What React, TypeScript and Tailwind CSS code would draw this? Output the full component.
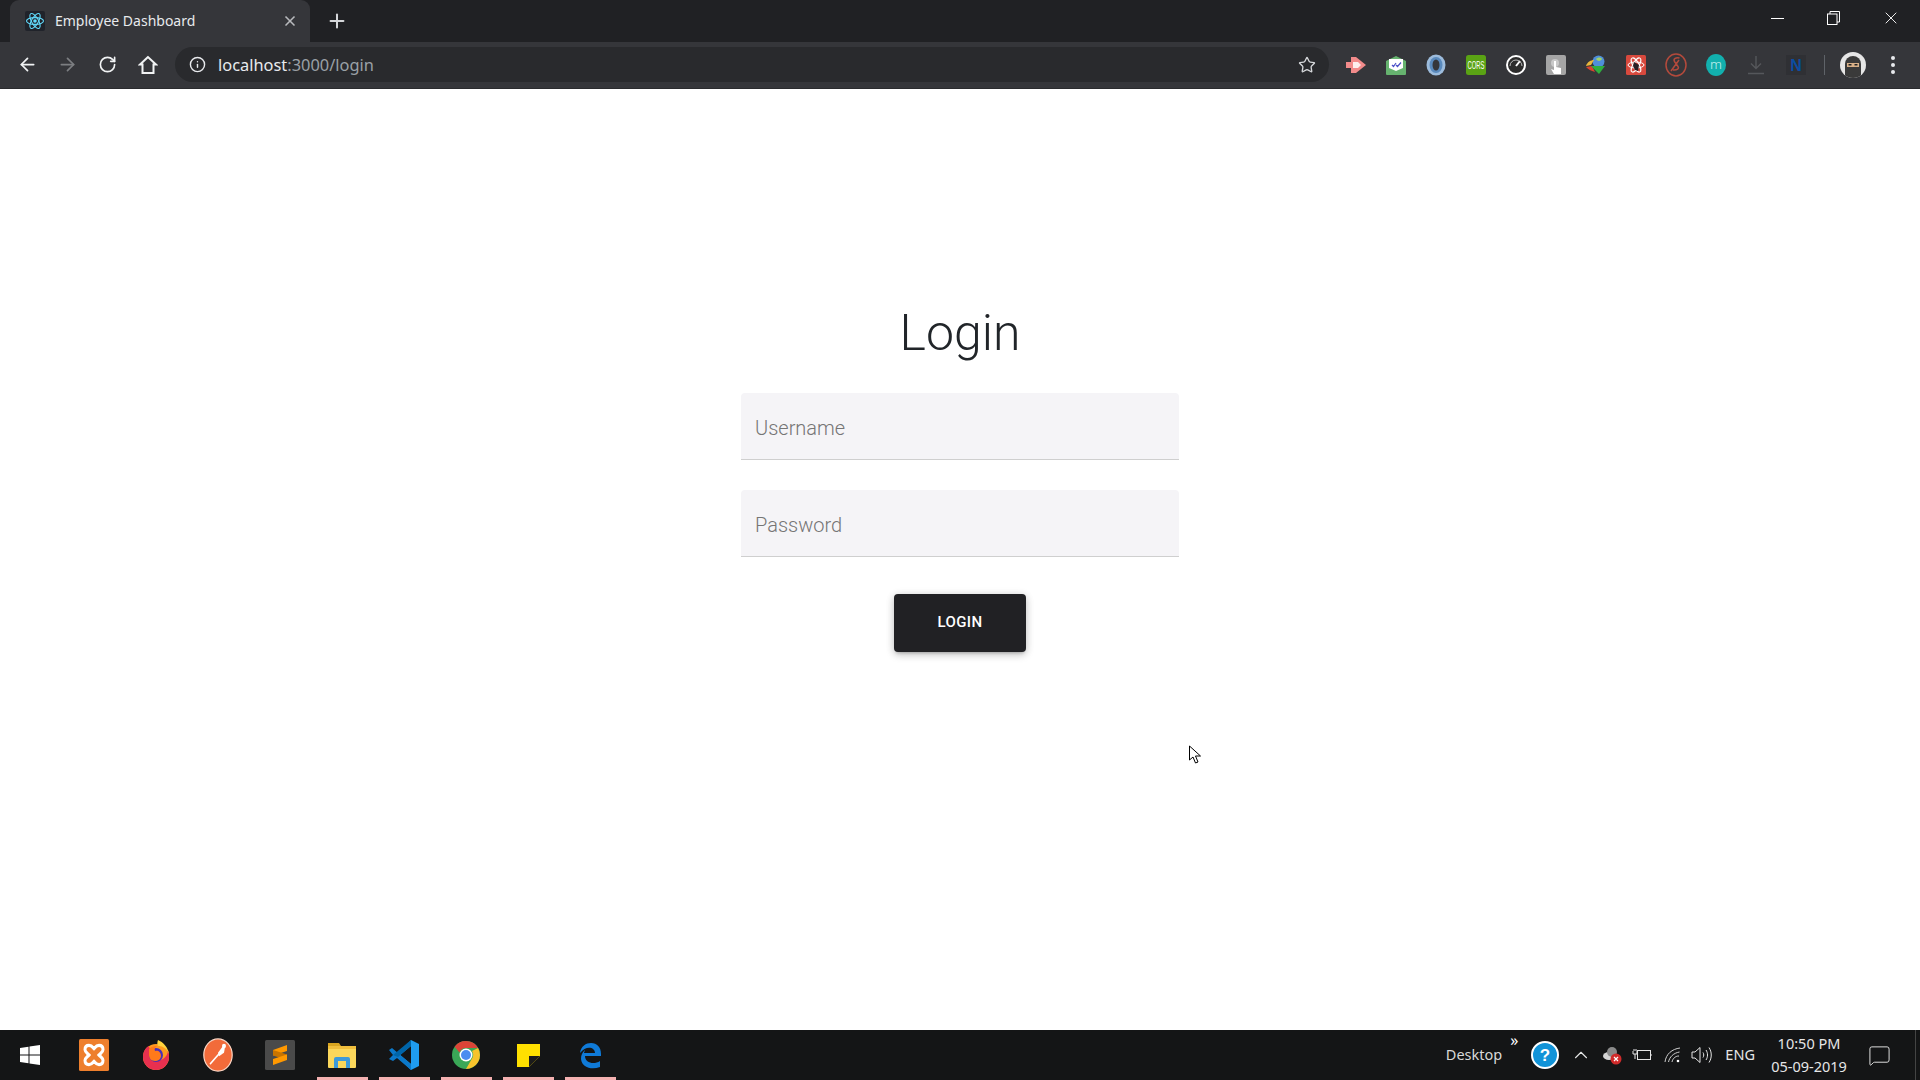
import { ArrowLeft, ArrowRight, RotateCw, Info, Star, Plus, X, ChevronUp, MessageSquare } from "lucide-react"

const uiFont = "font-['Noto_Sans','Open_Sans',sans-serif]"

function ReactLogo() {
    return (
        <svg width="20" height="20" viewBox="0 0 20 20" fill="none">
            <rect width="20" height="20" rx="2" fill="#20232a" />
            <g stroke="#61dafb" strokeWidth="1.1">
                <ellipse cx="10" cy="10" rx="8.5" ry="3.4" />
                <ellipse cx="10" cy="10" rx="8.5" ry="3.4" transform="rotate(60 10 10)" />
                <ellipse cx="10" cy="10" rx="8.5" ry="3.4" transform="rotate(120 10 10)" />
            </g>
            <circle cx="10" cy="10" r="1.8" fill="#61dafb" />
        </svg>
    )
}

// extension icons in the chrome toolbar
const extensions = [
    <svg key="a" width="22" height="22" viewBox="0 0 22 22">
        <path d="M1 8h5V3h5l10 8-10 8h-5v-5H1z" fill="#f28b8b" />
        <path d="M8 8h5l3 3-3 3H8z" fill="#fff" opacity="0.85" />
    </svg>,
    <svg key="b" width="20" height="20" viewBox="0 0 20 20">
        <path d="M0 6l10-5 10 5v13a1 1 0 0 1-1 1H1a1 1 0 0 1-1-1z" fill="#66b36f" />
        <path d="M3 4h14v9l-7 3-7-3z" fill="#fff" />
        <path d="M6 10l1.5 1.5L10 8M10 10l1.5 1.5L15 7.5" stroke="#4b50c8" strokeWidth="1.2" fill="none" />
    </svg>,
    <svg key="c" width="20" height="22" viewBox="0 0 20 22">
        <ellipse cx="10" cy="11" rx="9.5" ry="10.5" fill="#9dbcdc" />
        <ellipse cx="10" cy="11" rx="6.5" ry="8" fill="#5a8abd" />
        <ellipse cx="10" cy="11" rx="3.5" ry="5.5" fill="#35363a" />
    </svg>,
    <svg key="d" width="20" height="20" viewBox="0 0 20 20">
        <rect width="20" height="20" rx="2.5" fill="#5aa314" />
        <text x="10" y="14" textAnchor="middle" fontSize="10" fontFamily="'Liberation Sans',sans-serif" fill="#fff" textLength="17" lengthAdjust="spacingAndGlyphs">CORS</text>
    </svg>,
    <svg key="e" width="20" height="20" viewBox="0 0 20 20">
        <circle cx="10" cy="10" r="9" fill="#2c2c2c" stroke="#fff" strokeWidth="2" />
        <path d="M10 11l4-5" stroke="#fff" strokeWidth="2" />
        <path d="M4 11a6 6 0 0 1 12 0" stroke="#ddd" strokeWidth="0.8" fill="none" />
    </svg>,
    <svg key="f" width="20" height="20" viewBox="0 0 20 20">
        <rect width="20" height="20" rx="2" fill="#a5a5a5" />
        <circle cx="9" cy="8" r="4" fill="#c9c9c9" />
        <path d="M8 6h2v6l5 1v6H8l-3-5 3 1z" fill="#fff" />
    </svg>,
    <svg key="g" width="22" height="22" viewBox="0 0 22 22">
        <circle cx="13.5" cy="7.5" r="6" fill="#4f8fd9" />
        <path d="M11 5c2-2 5-2 6 0-1 2-4 3-6 0z" fill="#9fd06a" />
        <path d="M1 12c1-4 5-6 8-6l-3 5z" fill="#e8b73a" />
        <path d="M1 13c2 2 5 4 9 5l-3-6z" fill="#d8452e" />
        <path d="M6 12h14l-6 8z" fill="#2fae3f" />
    </svg>,
    <svg key="h" width="20" height="20" viewBox="0 0 20 20">
        <rect width="20" height="20" rx="1.5" fill="#d8493d" />
        <g stroke="#fff" strokeWidth="1" fill="none">
            <ellipse cx="10" cy="10" rx="8" ry="3" />
            <ellipse cx="10" cy="10" rx="8" ry="3" transform="rotate(60 10 10)" />
            <ellipse cx="10" cy="10" rx="8" ry="3" transform="rotate(120 10 10)" />
        </g>
        <path d="M8 7l5 3-1 6-3-1-2-4z" fill="#2a2024" />
    </svg>,
    <svg key="i" width="22" height="24" viewBox="0 0 22 24" fill="none" stroke="#b34a3c" strokeWidth="1.5">
        <ellipse cx="11" cy="12" rx="10" ry="11" />
        <path d="M14.5 5C11 4 8 6 9.5 8.5l3.5 5c1.500 2-1 4-5 3.500M6 18l8-11" />
    </svg>,
    <svg key="j" width="20" height="22" viewBox="0 0 20 22">
        <ellipse cx="10" cy="11" rx="10" ry="11" fill="#12b0ae" />
        <text x="10" y="15" textAnchor="middle" fontSize="13" fontFamily="Roboto,sans-serif" fontWeight="300" fill="#c5f1ef">m</text>
    </svg>,
    <svg key="k" width="18" height="20" viewBox="0 0 18 20" fill="none" stroke="#55575b" strokeWidth="1.4">
        <path d="M9 1v12M4 8.5L9 13.5l5-5M1 18.5h16" />
    </svg>,
    <svg key="l" width="20" height="20" viewBox="0 0 20 20">
        <rect width="20" height="20" fill="#2f3034" />
        <text x="10" y="16" textAnchor="middle" fontSize="16" fontWeight="700" fontFamily="'Liberation Sans',sans-serif" fill="#0b4da2">N</text>
    </svg>,
]

const taskbarApps = [
    {
        id: "xampp",
        open: false,
        icon: (
            <svg width="30" height="32" viewBox="0 0 30 30" preserveAspectRatio="none" fill="none">
                <rect width="30" height="30" rx="1.5" fill="#ee7f2d" />
                <path d="M10 6c3 0 4 2 5 3 1-1 2-3 5-3 3 0 4 2 4 4s-2 3-4 5c2 2 4 3 4 5s-1 4-4 4c-3 0-4-2-5-3-1 1-2 3-5 3-3 0-4-2-4-4s2-3 4-5c-2-2-4-3-4-5s1-4 4-4z" stroke="#fff" strokeWidth="3" />
            </svg>
        ),
    },
    {
        id: "firefox",
        open: false,
        icon: (
            <svg width="30" height="32" viewBox="0 0 30 32">
                <circle cx="15" cy="18" r="13" fill="#ff9a1f" />
                <path d="M2 18c0-5 2-9 6-11 0 3 3 4 4 4l-3 5c2 5 8 7 13 4 3-2 5-5 5-9 1 2 1 5 1 7a13 13 0 0 1-26 0z" fill="#e8304f" />
                <circle cx="15" cy="16" r="7" fill="#4a2fb8" />
                <path d="M8 10c3-3 6-3 8-3-2 1-3 3-2 5 3-1 6 1 6 5 0 3-3 5-6 5-4 0-6-3-6-6z" fill="#ff7a1a" />
                <path d="M17 1c5 2 10 7 11 14-2-5-6-8-10-8-2 0-2-3-1-6z" fill="#ffd33d" />
            </svg>
        ),
    },
    {
        id: "postman",
        open: false,
        icon: (
            <svg width="30" height="34" viewBox="0 0 30 30" preserveAspectRatio="none" fill="none">
                <circle cx="15" cy="15" r="14.2" fill="#f26b3a" stroke="#fbd7c6" strokeWidth="1.2" />
                <path d="M7 23L18 12" stroke="#fff" strokeWidth="1.5" />
                <path d="M15 13l5-6 2 1-1 5-5 3z" fill="#fff" />
                <circle cx="21" cy="7" r="2" fill="#fff" />
            </svg>
        ),
    },
    {
        id: "sublime",
        open: false,
        icon: (
            <svg width="30" height="30" viewBox="0 0 30 30">
                <rect width="30" height="30" rx="1.5" fill="#4a4a4a" />
                <path d="M22 5v6L8 15.5V10z" fill="#ff9800" />
                <path d="M8 15.5V10l14 4.5V20z" fill="#c97400" />
                <path d="M22 14.5V20L8 25v-6z" fill="#ff9800" />
            </svg>
        ),
    },
    {
        id: "explorer",
        open: true,
        icon: (
            <svg width="28" height="28" viewBox="0 0 28 28">
                <path d="M0 2h11l2 3h-13z" fill="#d9a520" />
                <rect y="5" width="28" height="22" rx="1" fill="#fbd75b" />
                <rect y="5" width="28" height="3" fill="#f0be3c" />
                <path d="M6 27v-9a2 2 0 0 1 2-2h12a2 2 0 0 1 2 2v9h-4v-7h-8v7z" fill="#3d9ad9" />
            </svg>
        ),
    },
    {
        id: "vscode",
        open: true,
        icon: (
            <svg width="30" height="32" viewBox="0 0 30 32">
                <path d="M22 1l8 4v22l-8 4-14-13.5z" fill="#1f9cf0" />
                <path d="M22 7v18L11 16z" fill="#141516" />
                <path d="M0 11l3-2 19 16v6L8 19l-4 3-4-2 4-4z" fill="#0b78c9" />
                <path d="M22 1v6L9 18l-5-2z" fill="#0065a9" />
            </svg>
        ),
    },
    {
        id: "chrome",
        open: true,
        icon: (
            <svg width="28" height="28" viewBox="0 0 28 28">
                <circle cx="14" cy="14" r="14" fill="#3aa757" />
                <path d="M14 0a14 14 0 0 1 12.1 7H14a7 7 0 0 0-6.5 4.4L2.6 5.8A14 14 0 0 1 14 0z" fill="#db4437" />
                <path d="M26.1 7A14 14 0 0 1 14 28l6-10.500A7 7 0 0 0 20 10z" fill="#f7c32c" />
                <circle cx="14" cy="14" r="6.500" fill="#fff" />
                <circle cx="14" cy="14" r="5" fill="#4a8df0" />
            </svg>
        ),
    },
    {
        id: "sticky",
        open: true,
        icon: (
            <svg width="23" height="23" viewBox="0 0 23 23">
                <path d="M0 0h23v12L12 23H0z" fill="#ffe000" />
                <path d="M12 12h11L12 23z" fill="#1b1b1b" />
            </svg>
        ),
    },
    {
        id: "edge",
        open: true,
        icon: (
            <svg width="26" height="28" viewBox="0 0 26 28" fill="none">
                <path d="M3 12C4 5 9 2 14 2c6 0 10 4 10 11v2H8c0 7 9 9 15 5v6c-8 3-18 1-19-8 0-4 1-6 4-9 0 1-1 2-1 3h11c0-6-9-8-15 0z" fill="#0f7ad8" />
            </svg>
        ),
    },
]

export default function App() {
    return (
        <div className={`flex flex-col h-screen bg-white overflow-hidden ${uiFont}`}>
            {/* Title bar */}
            <div className="flex h-[42px] shrink-0 bg-[#202124] pl-[10px] text-white">
                <div className="flex items-center w-[300px] h-full bg-[#35363a] rounded-t-[9px] pl-[15px] pr-[12px]">
                    <ReactLogo />
                    <span className="ml-[10px] pb-[2px] text-[14px] text-[#e8eaed] whitespace-nowrap">Employee Dashboard</span>
                    <X className="ml-auto text-[#b8babd]" size={16} strokeWidth={2.5} />
                </div>
                <div className="flex items-center ml-[16px]">
                    <Plus className="text-[#d5d7da]" size={22} strokeWidth={2.2} />
                </div>
                <div className="flex ml-auto">
                    <div className="flex items-center justify-center w-[56px] pb-[6px]">
                        <span className="w-[13px] h-px bg-white" />
                    </div>
                    <div className="flex items-center justify-center w-[56px] pb-[6px]">
                        <svg width="13" height="14" viewBox="0 0 13 14" fill="none" stroke="#fff">
                            <rect x="0.5" y="3" width="9.500" height="10.500" />
                            <path d="M3 3V0.500h9.500V11H10" />
                        </svg>
                    </div>
                    <div className="flex items-center justify-center w-[59px] pb-[6px]">
                        <X size={20} strokeWidth={1.1} className="text-white" />
                    </div>
                </div>
            </div>

            {/* Toolbar */}
            <div className="flex items-center h-[47px] shrink-0 bg-[#35363a] border-b border-[#2a2b2e] pl-[7px] pb-[1px]">
                <div className="flex items-center justify-center w-10">
                    <ArrowLeft size={21} strokeWidth={2} className="text-[#f1f3f4]" />
                </div>
                <div className="flex items-center justify-center w-10">
                    <ArrowRight size={21} strokeWidth={2} className="text-[#7c7e81]" />
                </div>
                <div className="flex items-center justify-center w-10">
                    <RotateCw size={19} strokeWidth={2.1} className="text-[#f1f3f4]" />
                </div>
                <div className="flex items-center justify-center w-10 pl-[2px]">
                    <svg width="20" height="19" viewBox="0 0 20 19" fill="none" stroke="#f1f3f4" strokeWidth="2" strokeLinejoin="miter">
                        <path d="M10 2L2 9.500h2.500V18h11V9.500H18z" />
                    </svg>
                </div>
                <div className="flex items-center w-[1154px] h-[35px] ml-2 rounded-full bg-[#292a2d] pl-[14px] pr-[13px]">
                    <Info size={17} strokeWidth={2} className="text-[#e8eaed]" />
                    <span className="ml-[12px] pt-[2px] text-[16.400px] text-[#e8eaed] whitespace-nowrap">
                        localhost<span className="text-[#9aa0a6]">:3000/login</span>
                    </span>
                    <Star size={18} strokeWidth={1.8} className="ml-auto text-[#d5d7da]" />
                </div>
                <div className="flex items-center ml-[7px]">
                    {extensions.map((icon, i) => (
                        <div key={i} className="flex items-center justify-center w-10 h-[24px]">
                            {icon}
                        </div>
                    ))}
                </div>
                <div className="w-px h-[20px] ml-[8px] bg-[#5f6368]" />
                <div className="flex items-center justify-center w-[26px] h-[26px] ml-[15px] rounded-full bg-[#e6e6e6] overflow-hidden">
                    <svg width="26" height="26" viewBox="0 0 26 26">
                        <path d="M5 26V12a8 8 0 0 1 16 0v14z" fill="#3a3a3a" />
                        <rect x="7" y="11" width="12" height="4" fill="#d8b088" />
                        <rect x="8.500" y="12" width="3" height="1.500" fill="#222" />
                        <rect x="14.500" y="12" width="3" height="1.500" fill="#222" />
                    </svg>
                </div>
                <div className="flex flex-col items-center justify-center gap-[3px] w-[14px] ml-[20px]">
                    <span className="w-[4px] h-[4px] rounded-full bg-[#e8eaed]" />
                    <span className="w-[4px] h-[4px] rounded-full bg-[#e8eaed]" />
                    <span className="w-[4px] h-[4px] rounded-full bg-[#e8eaed]" />
                </div>
            </div>

            {/* Login form */}
            <main className="relative flex-1 flex flex-col items-center pt-[216px] font-['Roboto',sans-serif]">
                <h1 className="text-[50px] leading-[56px] font-light text-[#212529]">Login</h1>
                <input
                    placeholder="Username"
                    className="w-[438px] h-[67px] mt-[32px] rounded-t-[4px] bg-[#f5f4f7] border-b border-[#cfcfcf] pl-[14px] pt-[3px] text-[20px] font-light outline-none placeholder:text-[#757575]"
                />
                <input
                    placeholder="Password"
                    className="w-[438px] h-[67px] mt-[30px] rounded-t-[4px] bg-[#f5f4f7] border-b border-[#cfcfcf] pl-[14px] pt-[3px] text-[20px] font-light outline-none placeholder:text-[#757575]"
                />
                <button className="w-[132px] h-[58px] mt-[37px] pb-px rounded-[4px] bg-[#212124] text-white text-[15px] font-medium tracking-[0.4px] shadow-[0_3px_3px_-2px_rgba(0,0,0,0.2),0_3px_8px_0_rgba(0,0,0,0.16),0_1px_8px_0_rgba(0,0,0,0.12)]">
                    LOGIN
                </button>

                {/* mouse pointer caught in the screenshot */}
                <svg className="absolute left-[1188px] top-[656px]" width="14" height="20" viewBox="0 0 14 20" fill="#fff" stroke="#000" strokeWidth="1">
                    <path d="M1.500 1v14l3.500-3 2.500 6 2.500-1-2.500-6h5z" />
                </svg>
            </main>

            {/* Windows taskbar */}
            <footer className="flex items-stretch h-[50px] shrink-0 bg-[#141516] text-[#e6e6e6]">
                <div className="flex items-center justify-center w-[63px] pr-[3px]">
                    <svg width="20" height="20" viewBox="0 0 20 20" fill="#fff">
                        <path d="M0 3l8.500-1.200V9.500H0zM9.500 1.600L20 0v9.500H9.500zM0 10.500h8.500v7.700L0 17zM9.500 10.500H20V20L9.500 18.400z" />
                    </svg>
                </div>
                {taskbarApps.map((app) => (
                    <div key={app.id} className="relative flex items-center justify-center w-[62px]">
                        {app.icon}
                        {app.open && <span className="absolute bottom-0 left-[6px] right-[5px] h-[3px] bg-[#f4b1b1]" />}
                    </div>
                ))}

                <div className="flex items-center ml-auto">
                    <span className="text-[14.500px] text-[#d9d9d9] whitespace-nowrap">Desktop</span>
                    <span className="self-start mt-[1px] ml-[8px] text-[16px] leading-[18px] text-white">»</span>
                    <svg className="ml-[13px]" width="28" height="28" viewBox="0 0 28 28">
                        <circle cx="14" cy="14" r="13" fill="#1193d8" stroke="#fff" strokeWidth="2" />
                        <text x="14" y="20" textAnchor="middle" fontSize="17" fontWeight="700" fontFamily="'Liberation Sans',sans-serif" fill="#fff">?</text>
                    </svg>
                    <ChevronUp className="ml-[11px] text-[#e6e6e6]" size={22} strokeWidth={1.2} />
                    <svg className="ml-[10px]" width="20" height="20" viewBox="0 0 20 20">
                        <ellipse cx="7" cy="11" rx="6" ry="4" fill="#d5d5d5" />
                        <circle cx="10" cy="7" r="5" fill="#8a8a8a" />
                        <circle cx="14" cy="14" r="5.500" fill="#d02b2b" />
                        <path d="M12 12l4 4M16 12l-4 4" stroke="#fff" strokeWidth="1.2" />
                    </svg>
                    <svg className="ml-[10px]" width="20" height="14" viewBox="0 0 20 14" fill="none" stroke="#e6e6e6" strokeWidth="1">
                        <rect x="5.500" y="2.500" width="13" height="9" />
                        <path d="M1 3v3h4V3M3 6v5M2 1v2M4 1v2M19 6v2" />
                    </svg>
                    <svg className="ml-[12px]" width="18" height="16" viewBox="0 0 18 16" fill="none" stroke="#cfcfcf" strokeWidth="1">
                        <path d="M1 15C2 7 8 2 16 1M4.500 15c1-5 5-9 11-10M8 15c.5-3 3-6 7-6" />
                        <circle cx="14" cy="14" r="1.300" fill="#fff" stroke="none" />
                    </svg>
                    <svg className="ml-[9px]" width="21" height="18" viewBox="0 0 21 18" fill="none" stroke="#e6e6e6" strokeWidth="1">
                        <path d="M1 6h3l5-4.500v15L4 12H1zM12 6.500c1 1.500 1 3.500 0 5M15 4c2 3 2 7 0 10M18 1.500c3 4.500 3 10.500 0 15" />
                    </svg>
                    <span className="ml-[13px] text-[14.500px] whitespace-nowrap">ENG</span>
                    <div className="flex flex-col items-center justify-center w-[92px] ml-[8px] text-[14.500px] leading-[23px] whitespace-nowrap">
                        <span>10:50 PM</span>
                        <span>05-09-2019</span>
                    </div>
                    <MessageSquare className="ml-[13px] text-[#e6e6e6]" size={23} strokeWidth={1} />
                    <div className="self-stretch w-px ml-[24px] mr-[4px] bg-[#444]" />
                </div>
            </footer>
        </div>
    )
}
